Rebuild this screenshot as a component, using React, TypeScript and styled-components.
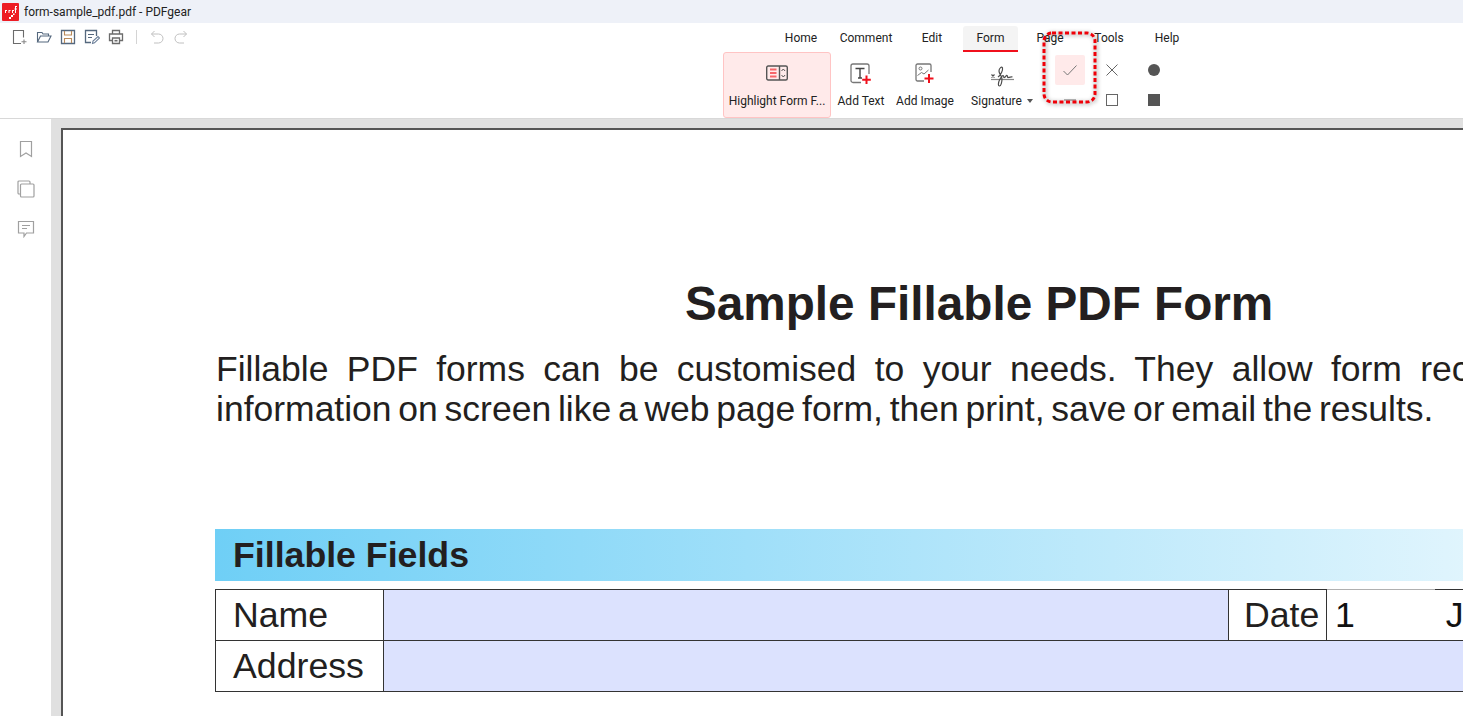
import React from 'react';
import styled, { createGlobalStyle } from 'styled-components';

const Global = createGlobalStyle`
    html, body {
        margin: 0;
        padding: 0;
        height: 100%;
        overflow: hidden;
        background: #fff;
    }
`;

const Window = styled('div')`
    width: 1463px;
    height: 716px;
    display: flex;
    flex-direction: column;
    overflow: hidden;
    position: relative;
    font-family: Roboto, "Open Sans", sans-serif;
    color: #222;
`;

const TitleBar = styled('div')`
    height: 23px;
    flex: none;
    background: #eef1f8;
    display: flex;
    align-items: center;
    padding-left: 2px;
    gap: 5px;
    font-size: 12px;
`;

const Ribbon = styled('div')`
    height: 95px;
    flex: none;
    background: #fff;
    display: flex;
    border-bottom: 1px solid #d8d8d8;
`;

const QuickBar = styled('div')`
    width: 723px;
    flex: none;
    height: 28px;
    display: flex;
    align-items: center;
    padding-left: 12px;
    box-sizing: border-box;
    gap: 8px;
`;

const QuickDivider = styled('span')`
    width: 1px;
    height: 14px;
    background: #d4d4d4;
    margin: 0 4px;
`;

const RibbonMain = styled('div')`
    display: flex;
    flex-direction: column;
`;

const Tabs = styled('div')`
    display: flex;
    height: 26px;
    margin: 3px 0 0 48px;
    font-size: 12px;
`;

const Tab = styled('div')<{ $w: number; $active?: boolean }>`
    width: ${p => p.$w}px;
    display: flex;
    align-items: center;
    justify-content: center;
    box-sizing: border-box;
    border-radius: 3px 3px 0 0;
    background: ${p => (p.$active ? '#f4f4f4' : 'transparent')};
    border-bottom: 2px solid ${p => (p.$active ? '#f0101c' : 'transparent')};
`;

const Tools = styled('div')`
    display: flex;
    height: 66px;
`;

const ToolButton = styled('div')<{ $w: number; $active?: boolean }>`
    width: ${p => p.$w}px;
    flex: none;
    box-sizing: border-box;
    display: flex;
    flex-direction: column;
    align-items: center;
    padding-top: 7px;
    gap: 8px;
    font-size: 12px;
    white-space: nowrap;
    border-radius: 3px;
    background: ${p => (p.$active ? '#ffeaea' : 'transparent')};
    border: 1px solid ${p => (p.$active ? '#ffc4c4' : 'transparent')};
`;

const ToolIcon = styled('div')<{ $dy?: number }>`
    height: 26px;
    box-sizing: border-box;
    padding-top: ${p => p.$dy || 0}px;
    display: flex;
    align-items: center;
`;

const Caret = styled('span')`
    display: inline-block;
    margin-left: 5px;
    vertical-align: 2px;
    border-left: 3px solid transparent;
    border-right: 3px solid transparent;
    border-top: 4px solid #555;
`;

const Shapes = styled('div')`
    margin: 3px 0 0 10px;
    display: grid;
    grid-template-columns: 30px 30px 30px;
    grid-template-rows: 30px 30px;
    column-gap: 12px;
    justify-items: center;
    align-items: center;
`;

const CheckCell = styled('div')`
    width: 30px;
    height: 30px;
    background: #ffeaea;
    border-radius: 2px;
    display: flex;
    align-items: center;
    justify-content: center;
`;

const Dash = styled('span')`
    width: 12px;
    height: 2px;
    background: #b8b8b8;
`;

const Callout = styled('div')`
    position: absolute;
    left: 1042px;
    top: 31px;
    width: 55px;
    height: 73px;
    filter: drop-shadow(1px 1px 2px rgba(0, 0, 0, 0.45));
`;

const Body = styled('div')`
    flex: 1;
    display: flex;
    min-height: 0;
`;

const Sidebar = styled('div')`
    width: 51px;
    flex: none;
    background: #fff;
    display: flex;
    flex-direction: column;
    align-items: center;
    padding-top: 21px;
    gap: 22px;
    box-sizing: border-box;
`;

const Workspace = styled('div')`
    flex: 1;
    background: #e0e0e0;
    padding: 9px 0 0 10px;
    overflow: hidden;
    min-width: 0;
`;

const Page = styled('div')`
    width: 1836px;
    height: 700px;
    background: #fff;
    box-sizing: border-box;
    border: 2px solid #555;
    padding: 0 0 0 152px;
    font-family: "Liberation Sans", Arial, sans-serif;
    color: #231f20;
    display: flex;
    flex-direction: column;
`;

const Heading = styled('h1')`
    margin: 146px 0 0 470px;
    font-size: 47.7px;
    line-height: 56px;
    font-weight: bold;
    white-space: nowrap;
`;

const Paragraph = styled('div')`
    margin: 17px 0 0 1px;
    font-size: 35.5px;
    line-height: 40px;
    white-space: nowrap;
`;

const Line = styled('div')<{ $spacing: number }>`
    word-spacing: ${p => p.$spacing}px;
`;

const SectionBar = styled('div')`
    margin-top: 100px;
    height: 52px;
    flex: none;
    background: linear-gradient(90deg, #6fcff6 0%, #fff 95%);
    font-size: 35.7px;
    font-weight: bold;
    line-height: 52px;
    padding-left: 18px;
`;

const FieldTable = styled('div')`
    margin-top: 8px;
    display: grid;
    grid-template-columns: 168px 845px 98px 1fr;
    grid-template-rows: 51px 51px;
    border-top: 1px solid #333;
    border-left: 1px solid #333;
    font-size: 35.7px;
`;

const LabelCell = styled('div')<{ $pad?: number }>`
    border-right: 1px solid #333;
    border-bottom: 1px solid #333;
    display: flex;
    align-items: center;
    padding-left: ${p => p.$pad ?? 17}px;
    white-space: nowrap;
`;

const Field = styled('div')<{ $span?: boolean }>`
    background: #dce2fe;
    border-right: 1px solid #333;
    border-bottom: 1px solid #333;
    grid-column: ${p => (p.$span ? 'span 3' : 'auto')};
`;

const Filled = styled('div')`
    position: relative;
    border-bottom: 1px solid #333;
    display: flex;
    align-items: center;
    padding-left: 8px;
    gap: 91px;
    color: #111;

    &::before {
        content: '';
        position: absolute;
        left: 0;
        top: -1px;
        width: 108px;
        height: 1px;
        background: #b0b0b0;
    }
`;

const line = { fill: 'none', stroke: '#6b6b6b', strokeWidth: 1.1 };

const Logo = () => (
    <svg width="17" height="18" viewBox="0 0 17 18">
        <rect width="17" height="18" rx="1" fill="#ed1c24" />
        <path d="M3 7h1v3H3zM4 7h1v1H4zM6.500 7h1v3h-1zM7.500 7h1v1h-1zM10 7h1v3h-1zM11 7h1v1h-1zM13 3h1v7h-1zM14 3h1v1h-1zM12.500 5.500h2.500v1h-2.500zM9 12h2v2H9zM11 10.500h1.500v1.500H11zM7 14h2v2H7z" fill="#fff" />
    </svg>
);

const NewFile = () => (
    <svg width="16" height="16" viewBox="0 0 16 16" {...line}>
        <path d="M9 14.500H1.500v-13h10v7" />
        <path d="M12 10.500v4.500M9.500 12.800h5" stroke="#888" />
    </svg>
);

const OpenFolder = () => (
    <svg width="16" height="16" viewBox="0 0 16 16" {...line}>
        <path d="M1.500 13V3.500h4.500l1 1.500h5.500v2M1.500 13h10.500l3-6H4.500z" stroke="#55687e" />
    </svg>
);

const Save = () => (
    <svg width="16" height="16" viewBox="0 0 16 16" {...line}>
        <path d="M1.500 1.500h13v13h-13z" stroke="#55687e" strokeWidth="1.300" />
        <path d="M4.500 2v4h7V2M4.500 14v-4.500h7V14" stroke="#b98a5a" />
    </svg>
);

const SaveAs = () => (
    <svg width="16" height="16" viewBox="0 0 16 16" {...line}>
        <path d="M7 13.500H1.500v-12h11V7" stroke="#55687e" strokeWidth="1.300" />
        <path d="M4 5.500h6M4 8.500h4" stroke="#55687e" />
        <path d="M8.500 14.500l.5-2.500 5-4.500 1.500 1.500-5 4.800z" stroke="#6b7f99" />
    </svg>
);

const Print = () => (
    <svg width="16" height="16" viewBox="0 0 16 16" {...line} strokeWidth="1.300">
        <path d="M4.500 5V1.500h7V5M4 11.500H1.500V5h13v6.500H12" />
        <path d="M4.500 9h7v5.500h-7z" />
        <path d="M6.500 11.700h3" strokeWidth="1.600" />
    </svg>
);

const Undo = ({ flip }: { flip?: boolean }) => (
    <svg width="16" height="16" viewBox="0 0 16 16" fill="none" stroke="#c0c0c0" style={flip ? { transform: 'scaleX(-1)' } : undefined}>
        <path d="M5.500 2L2.500 5l3 3M2.500 5h7a4 4 0 0 1 0 9H5" />
    </svg>
);

const HighlightIcon = () => (
    <svg width="22" height="16" viewBox="0 0 22 16" fill="none">
        <rect x="0.700" y="1" width="20.600" height="14" rx="1.500" stroke="#555" strokeWidth="1.400" />
        <path d="M13.500 1v14" stroke="#555" strokeWidth="1.400" />
        <path d="M4 4.500h6.500M4 8h6.500M4 11.500h6.500" stroke="#f6666a" strokeWidth="2" />
        <path d="M15.500 6l1.800-2 1.800 2M15.500 10l1.800 2 1.800-2" stroke="#555" />
    </svg>
);

const AddTextIcon = () => (
    <svg width="22" height="22" viewBox="0 0 22 22" fill="none">
        <path d="M11 19.500H3a2 2 0 0 1-2-2V3a2 2 0 0 1 2-2h14a2 2 0 0 1 2 2v8" stroke="#777" strokeWidth="1.300" />
        <path d="M5.500 5.500h9M10 5.500V15M8 15h4" stroke="#444" strokeWidth="1.400" />
        <path d="M16.500 12.500v8.500M12.200 16.800h8.600" stroke="#f0101c" strokeWidth="2" />
    </svg>
);

const AddImageIcon = () => (
    <svg width="20" height="21" viewBox="0 0 20 21" fill="none">
        <path d="M9 18H2.500a1.500 1.500 0 0 1-1.500-1.500V2.500A1.500 1.500 0 0 1 2.500 1h12A1.500 1.500 0 0 1 16 2.500V9" stroke="#777" strokeWidth="1.300" />
        <circle cx="5.500" cy="5.500" r="1.500" stroke="#777" />
        <path d="M2.500 12.500l4-3 2.500 1.500 4.500-4" stroke="#777" />
        <path d="M14 11v9M9.500 15.500h9" stroke="#f0101c" strokeWidth="2" />
    </svg>
);

const SignatureIcon = () => (
    <svg width="23" height="21" viewBox="0 0 23 21" fill="none" stroke="#4c4c4c" strokeWidth="1.200">
        <path d="M0 13.500h23" stroke="#888" />
        <path d="M0.500 8.500l3 3M3.500 8.500l-3 3" />
        <path d="M7 11c3-2 5-7 4.500-9S8 2 8 5s3 5 3 8-1 7-2.500 7S7 17 8.500 14c1-2 2-4 3.500-4.500 1.500 0 0 2.500 1.500 2s1.500-2.500 2.500-2 0 2.500 1.500 2 2.500-1 4-.5" />
    </svg>
);

const CheckIcon = () => (
    <svg width="14" height="11" viewBox="0 0 14 11" fill="none" stroke="#777">
        <path d="M0.500 6L4.500 10 13.500 0.500" />
    </svg>
);

const CrossIcon = () => (
    <svg width="12" height="12" viewBox="0 0 12 12" fill="none" stroke="#666">
        <path d="M0.500 0.500l11 11M11.500 0.500l-11 11" />
    </svg>
);

const SquareOutline = styled('span')`
    width: 10px;
    height: 10px;
    border: 1px solid #666;
`;

const SquareFill = styled('span')`
    width: 12px;
    height: 12px;
    background: #555;
`;

const Dot = styled('span')`
    width: 12px;
    height: 12px;
    border-radius: 50%;
    background: #555;
`;

const Bookmark = () => (
    <svg width="14" height="18" viewBox="0 0 14 18" fill="none" stroke="#a0a0a0" strokeWidth="1.200">
        <path d="M1.500 1.500h11v15l-5.500-3.500-5.500 3.500z" />
    </svg>
);

const Pages = () => (
    <svg width="18" height="18" viewBox="0 0 18 18" fill="none" stroke="#a0a0a0" strokeWidth="1.200">
        <path d="M3.500 14H2a1 1 0 0 1-1-1V2a1 1 0 0 1 1-1h10a1 1 0 0 1 1 1v2" />
        <rect x="3.500" y="4" width="13.500" height="13" rx="1" />
    </svg>
);

const CommentIcon = () => (
    <svg width="18" height="18" viewBox="0 0 18 18" fill="none" stroke="#a0a0a0" strokeWidth="1.200">
        <path d="M1.500 1.500h15v11.500H9.500l-2.500 3.500V13H1.500z" />
        <path d="M5 5.500h8M5 8.500h5" />
    </svg>
);

const tabs: [string, number][] = [
    ['Home', 60],
    ['Comment', 70],
    ['Edit', 62],
    ['Form', 55],
    ['Page', 64],
    ['Tools', 54],
    ['Help', 62],
];

export default () => (
    <Window>
        <Global />
        <TitleBar>
            <Logo />
            <span>form-sample_pdf.pdf - PDFgear</span>
        </TitleBar>
        <Ribbon>
            <QuickBar>
                <NewFile />
                <OpenFolder />
                <Save />
                <SaveAs />
                <Print />
                <QuickDivider />
                <Undo />
                <Undo flip />
            </QuickBar>
            <RibbonMain>
                <Tabs>
                    {tabs.map(([name, w]) => (
                        <Tab key={name} $w={w} $active={name === 'Form'}>{name}</Tab>
                    ))}
                </Tabs>
                <Tools>
                    <ToolButton $w={108} $active>
                        <ToolIcon><HighlightIcon /></ToolIcon>
                        Highlight Form F...
                    </ToolButton>
                    <ToolButton $w={60}>
                        <ToolIcon $dy={2}><AddTextIcon /></ToolIcon>
                        Add Text
                    </ToolButton>
                    <ToolButton $w={68}>
                        <ToolIcon><AddImageIcon /></ToolIcon>
                        Add Image
                    </ToolButton>
                    <ToolButton $w={86}>
                        <ToolIcon $dy={6}><SignatureIcon /></ToolIcon>
                        <span>Signature<Caret /></span>
                    </ToolButton>
                    <Shapes>
                        <CheckCell><CheckIcon /></CheckCell>
                        <CrossIcon />
                        <Dot />
                        <Dash />
                        <SquareOutline />
                        <SquareFill />
                    </Shapes>
                </Tools>
            </RibbonMain>
        </Ribbon>
        <Callout>
            <svg width="55" height="73" viewBox="0 0 55 73" fill="none">
                <rect x="2" y="2" width="51" height="69" rx="8" stroke="#f00008" strokeWidth="3" strokeDasharray="4 2.500" />
            </svg>
        </Callout>
        <Body>
            <Sidebar>
                <Bookmark />
                <Pages />
                <CommentIcon />
            </Sidebar>
            <Workspace>
                <Page>
                    <Heading>Sample Fillable PDF Form</Heading>
                    <Paragraph>
                        <Line $spacing={8.5}>Fillable PDF forms can be customised to your needs. They allow form recipients</Line>
                        <Line $spacing={-3.1}>information on screen like a web page form, then print, save or email the results.</Line>
                    </Paragraph>
                    <SectionBar>Fillable Fields</SectionBar>
                    <FieldTable>
                        <LabelCell>Name</LabelCell>
                        <Field />
                        <LabelCell $pad={15}>Date</LabelCell>
                        <Filled><span>1</span><span>J</span></Filled>
                        <LabelCell>Address</LabelCell>
                        <Field $span />
                    </FieldTable>
                </Page>
            </Workspace>
        </Body>
    </Window>
);
